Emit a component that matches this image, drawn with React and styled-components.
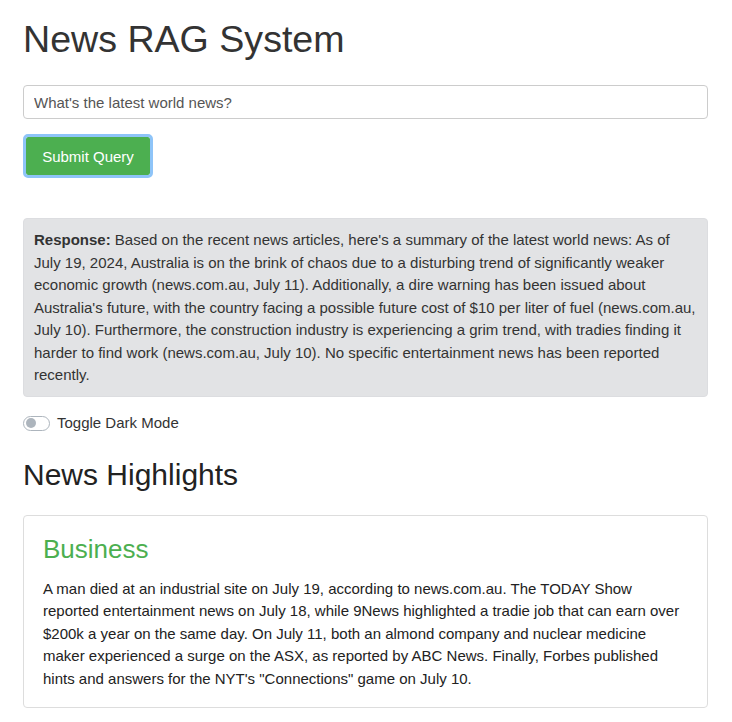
import React, { useState } from "react";
import styled, { createGlobalStyle } from "styled-components";

const GlobalStyle = createGlobalStyle`
  body {
    margin: 0;
    background: #fff;
    font-family: "Liberation Sans", Arial, sans-serif;
    color: #333;
  }
`;

const Page = styled.div`
  padding: 0 24px 0 23px;
  font-size: 15px;
  line-height: 1.5;
`;

const Title = styled.h1`
  font-size: 37.6px;
  font-weight: 400;
  line-height: 1.1;
  margin: 19px 0 25px;
  color: #333;
`;

const QueryForm = styled.form`
  display: flex;
  flex-direction: column;
  align-items: flex-start;
  gap: 15px;
`;

const QueryInput = styled.input`
  box-sizing: border-box;
  width: 100%;
  height: 34px;
  padding: 6px 10px;
  border: 1px solid #ccc;
  border-radius: 4px;
  font-family: inherit;
  font-size: 15px;
  color: #555;
  outline: none;

  &::placeholder {
    color: #555;
  }
`;

const SubmitButton = styled.button`
  box-sizing: border-box;
  width: 130px;
  height: 44px;
  border: 3px solid #8ec4f8;
  border-radius: 5px;
  background: #4caf50;
  background-clip: padding-box;
  color: #fff;
  font-family: inherit;
  font-size: 15px;
  cursor: pointer;
`;

const ResponseBox = styled.div`
  margin-top: 40px;
  padding: 10px 7px 9px 10px;
  background: #e2e3e5;
  border: 1px solid #dcdde0;
  border-radius: 4px;
`;

const ToggleRow = styled.label`
  display: flex;
  align-items: center;
  gap: 7px;
  margin-top: 15px;
  cursor: pointer;
`;

const Track = styled.span`
  position: relative;
  box-sizing: border-box;
  width: 27px;
  height: 15px;
  border: 1px solid #adb5bd;
  border-radius: 8px;
  background: ${(p) => (p.$on ? "#4caf50" : "#fff")};
`;

const Knob = styled.span`
  position: absolute;
  top: 1.5px;
  left: ${(p) => (p.$on ? "13.5px" : "1.5px")};
  width: 10px;
  height: 10px;
  border-radius: 50%;
  background: ${(p) => (p.$on ? "#fff" : "#adb5bd")};
`;

const SectionTitle = styled.h2`
  font-size: 30px;
  font-weight: 400;
  line-height: 1.1;
  margin: 24px 0 24px;
  color: #222;
`;

const Card = styled.div`
  padding: 19px 19px 17px;
  border: 1px solid #ddd;
  border-radius: 4px;
  background: #fff;
`;

const CardTitle = styled.h3`
  font-size: 26px;
  font-weight: 400;
  line-height: 1.1;
  margin: 0 0 14px;
  color: #4caf50;
`;

const CardText = styled.p`
  margin: 0;
  color: #222;
`;

const highlights = [
  {
    category: "Business",
    summary:
      'A man died at an industrial site on July 19, according to news.com.au. The TODAY Show reported entertainment news on July 18, while 9News highlighted a tradie job that can earn over $200k a year on the same day. On July 11, both an almond company and nuclear medicine maker experienced a surge on the ASX, as reported by ABC News. Finally, Forbes published hints and answers for the NYT\'s "Connections" game on July 10.',
  },
];

export default function App() {
  const [dark, setDark] = useState(false);

  return (
    <Page>
      <GlobalStyle />
      <Title>News RAG System</Title>
      <QueryForm onSubmit={(e) => e.preventDefault()}>
        <QueryInput type="text" placeholder="What's the latest world news?" />
        <SubmitButton type="submit">Submit Query</SubmitButton>
      </QueryForm>
      <ResponseBox>
        <strong>Response:</strong> Based on the recent news articles, here's a
        summary of the latest world news: As of July 19, 2024, Australia is on
        the brink of chaos due to a disturbing trend of significantly weaker
        economic growth (news.com.au, July 11). Additionally, a dire warning has
        been issued about Australia's future, with the country facing a possible
        future cost of $10 per liter of fuel (news.com.au, July 10).
        Furthermore, the construction industry is experiencing a grim trend,
        with tradies finding it harder to find work (news.com.au, July 10). No
        specific entertainment news has been reported recently.
      </ResponseBox>
      <ToggleRow onClick={() => setDark(!dark)}>
        <Track $on={dark}>
          <Knob $on={dark} />
        </Track>
        Toggle Dark Mode
      </ToggleRow>
      <SectionTitle>News Highlights</SectionTitle>
      {highlights.map((h) => (
        <Card key={h.category}>
          <CardTitle>{h.category}</CardTitle>
          <CardText>{h.summary}</CardText>
        </Card>
      ))}
    </Page>
  );
}
